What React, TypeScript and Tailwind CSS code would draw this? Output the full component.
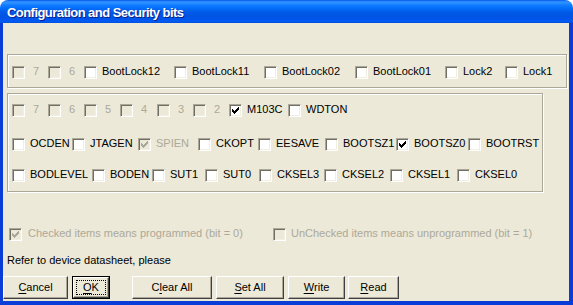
import type { ReactNode } from 'react';

type Bit = {
  label: string;
  w: string;
  checked?: boolean;
  disabled?: boolean;
  digit?: boolean;
};

const lockBits: Bit[] = [
  { label: '7', w: 'w-[36px]', disabled: true, digit: true },
  { label: '6', w: 'w-[36px]', disabled: true, digit: true },
  { label: 'BootLock12', w: 'w-[90px]' },
  { label: 'BootLock11', w: 'w-[90px]' },
  { label: 'BootLock02', w: 'w-[91px]' },
  { label: 'BootLock01', w: 'w-[90px]' },
  { label: 'Lock2', w: 'w-[60px]' },
  { label: 'Lock1', w: 'w-[56px]' },
];

const extBits: Bit[] = [
  { label: '7', w: 'w-[36px]', disabled: true, digit: true },
  { label: '6', w: 'w-[36px]', disabled: true, digit: true },
  { label: '5', w: 'w-[36px]', disabled: true, digit: true },
  { label: '4', w: 'w-[37px]', disabled: true, digit: true },
  { label: '3', w: 'w-[36px]', disabled: true, digit: true },
  { label: '2', w: 'w-[36px]', disabled: true, digit: true },
  { label: 'M103C', w: 'w-[59px]', checked: true },
  { label: 'WDTON', w: 'w-[60px]' },
];

const highBits: Bit[] = [
  { label: 'OCDEN', w: 'w-[60px]' },
  { label: 'JTAGEN', w: 'w-[66px]' },
  { label: 'SPIEN', w: 'w-[60px]', checked: true, disabled: true },
  { label: 'CKOPT', w: 'w-[60px]' },
  { label: 'EESAVE', w: 'w-[67px]' },
  { label: 'BOOTSZ1', w: 'w-[71px]' },
  { label: 'BOOTSZ0', w: 'w-[72px]', checked: true },
  { label: 'BOOTRST', w: 'w-[62px]' },
];

const lowBits: Bit[] = [
  { label: 'BODLEVEL', w: 'w-[80px]' },
  { label: 'BODEN', w: 'w-[60px]' },
  { label: 'SUT1', w: 'w-[53px]' },
  { label: 'SUT0', w: 'w-[54px]' },
  { label: 'CKSEL3', w: 'w-[65px]' },
  { label: 'CKSEL2', w: 'w-[66px]' },
  { label: 'CKSEL1', w: 'w-[67px]' },
  { label: 'CKSEL0', w: 'w-[50px]' },
];

const CheckBox = ({ checked, disabled }: { checked?: boolean; disabled?: boolean }) => (
  <span
    className={`box-border block h-[13px] w-[13px] shrink-0 border border-t-[#ACA899] border-l-[#ACA899] border-r-white border-b-white shadow-[inset_1px_1px_0_#716F64,inset_-1px_-1px_0_#F1EFE2] ${
      disabled ? 'bg-[#ECE9D8]' : 'bg-white'
    }`}
  >
    {checked && (
      <svg width="11" height="11" viewBox="0 0 11 11" className="block" shapeRendering="crispEdges">
        <g fill={disabled ? '#ACA899' : '#000'}>
          <rect x="2" y="4" width="1" height="3" />
          <rect x="3" y="5" width="1" height="3" />
          <rect x="4" y="6" width="1" height="3" />
          <rect x="5" y="5" width="1" height="3" />
          <rect x="6" y="4" width="1" height="3" />
          <rect x="7" y="3" width="1" height="3" />
          <rect x="8" y="2" width="1" height="3" />
        </g>
      </svg>
    )}
  </span>
);

const BitItem = ({ bit }: { bit: Bit }) => (
  <div className={`flex shrink-0 items-center gap-[5px] ${bit.w}`}>
    <CheckBox checked={bit.checked} disabled={bit.disabled} />
    <span
      className={`whitespace-nowrap leading-[13px] pb-[2px] ${bit.digit ? 'ml-[3px]' : ''} ${
        bit.disabled ? 'text-[#ACA899]' : 'text-black'
      }`}
    >
      {bit.label}
    </span>
  </div>
);

const BitRow = ({ bits, className = '' }: { bits: Bit[]; className?: string }) => (
  <div className={`flex h-[13px] items-center ${className}`}>
    {bits.map((b, i) => (
      <BitItem key={b.label + i} bit={b} />
    ))}
  </div>
);

const Button = ({ w, children, isDefault }: { w: string; children: ReactNode; isDefault?: boolean }) => (
  <button
    className={`relative box-border h-[23px] shrink-0 bg-[#ECE9D8] p-0 text-[11px] text-black ${w} ${
      isDefault ? 'border border-black' : ''
    }`}
  >
    <span className="box-border flex h-full w-full items-center justify-center border border-t-white border-l-white border-r-[#404040] border-b-[#404040] shadow-[inset_-1px_-1px_0_#ACA899] pb-[1px]">
      {children}
    </span>
    {isDefault && <span className="absolute inset-[3px] border border-dotted border-black" />}
  </button>
);

const U = ({ children }: { children: ReactNode }) => (
  <span className="underline underline-offset-[2px]">{children}</span>
);

export default function App() {
  return (
    <div className="h-[305px] w-[573px] bg-white font-['Liberation_Sans',Arial,sans-serif] text-[11px]">
      <div className="flex h-full w-full flex-col overflow-hidden rounded-t-[8px]">
        {/* title bar */}
        <div className="flex h-[23px] shrink-0 items-center pl-[7px] pt-[1px] bg-[linear-gradient(to_bottom,#0058EE_0%,#3593FF_8%,#288EFF_14%,#127DFF_22%,#036FFC_34%,#0262EE_46%,#0057E5_58%,#0054E3_72%,#0055EB_84%,#005BF5_92%,#0050D8_100%)]">
          <span className="text-[13px] font-bold leading-[15px] tracking-[-0.55px] text-white [text-shadow:1px_1px_0_#0A1E8C]">
            Configuration and Security bits
          </span>
        </div>

        {/* client area */}
        <div className="flex flex-1 flex-col border-l-[3px] border-r-[4px] border-b-[4px] border-[#0A3CD8] bg-[#ECE9D8]">
          <div className="ml-[4px] mt-[31px] box-border h-[34px] w-[560px] border border-[#ACA899] pl-[4px] pt-[11px] shadow-[1px_1px_0_#fff,inset_1px_1px_0_#fff]">
            <BitRow bits={lockBits} />
          </div>

          <div className="ml-[4px] mt-[5px] box-border h-[99px] w-[536px] border border-[#ACA899] pl-[4px] pt-[10px] shadow-[1px_1px_0_#fff,inset_1px_1px_0_#fff]">
            <BitRow bits={extBits} />
            <BitRow bits={highBits} className="mt-[21px]" />
            <BitRow bits={lowBits} className="mt-[18px]" />
          </div>

          <div className="ml-[6px] mt-[36px] flex h-[13px] items-center">
            <div className="flex w-[264px] shrink-0 items-center gap-[6px]">
              <CheckBox checked disabled />
              <span className="whitespace-nowrap pb-[2px] leading-[13px] text-[#ACA899]">
                Checked items means programmed (bit = 0)
              </span>
            </div>
            <div className="flex shrink-0 items-center gap-[5px]">
              <CheckBox disabled />
              <span className="whitespace-nowrap pb-[2px] leading-[13px] text-[#ACA899]">
                UnChecked items means unprogrammed (bit = 1)
              </span>
            </div>
          </div>

          <div className="ml-[4px] mt-[13px] leading-[13px] text-black">Refer to device datasheet, please</div>

          <div className="mt-[9px] flex items-center">
            <Button w="w-[65px]">
              <U>C</U>ancel
            </Button>
            <Button w="w-[38px] ml-[4px]" isDefault>
              <U>O</U>K
            </Button>
            <Button w="w-[80px] ml-[22px]">
              C<U>l</U>ear All
            </Button>
            <Button w="w-[68px] ml-[4px]">
              <U>S</U>et All
            </Button>
            <Button w="w-[57px] ml-[4px]">
              <U>W</U>rite
            </Button>
            <Button w="w-[51px] ml-[3px]">
              <U>R</U>ead
            </Button>
          </div>
        </div>
      </div>
    </div>
  );
}
